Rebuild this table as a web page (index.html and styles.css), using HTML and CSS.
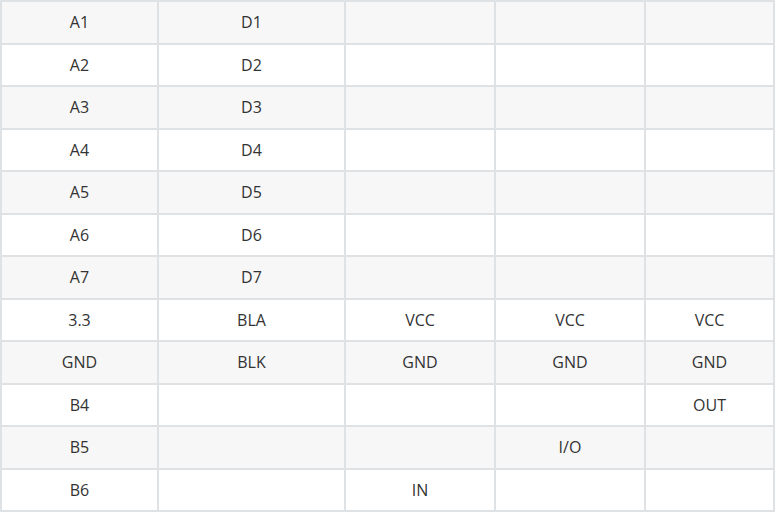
FILE: index.html
```html
<!DOCTYPE html>
<html>
<head>
<meta charset="utf-8">
<link rel="stylesheet" href="styles.css">
</head>
<body>
<table class="pins">
  <colgroup>
    <col class="c1"><col class="c2"><col class="c3"><col class="c4"><col class="c5">
  </colgroup>
  <tbody>
    <tr><td>A1</td><td>D1</td><td></td><td></td><td></td></tr>
    <tr><td>A2</td><td>D2</td><td></td><td></td><td></td></tr>
    <tr><td>A3</td><td>D3</td><td></td><td></td><td></td></tr>
    <tr><td>A4</td><td>D4</td><td></td><td></td><td></td></tr>
    <tr><td>A5</td><td>D5</td><td></td><td></td><td></td></tr>
    <tr><td>A6</td><td>D6</td><td></td><td></td><td></td></tr>
    <tr><td>A7</td><td>D7</td><td></td><td></td><td></td></tr>
    <tr><td>3.3</td><td>BLA</td><td>VCC</td><td>VCC</td><td>VCC</td></tr>
    <tr><td>GND</td><td>BLK</td><td>GND</td><td>GND</td><td>GND</td></tr>
    <tr><td>B4</td><td></td><td></td><td></td><td>OUT</td></tr>
    <tr><td>B5</td><td></td><td></td><td>I/O</td><td></td></tr>
    <tr><td>B6</td><td></td><td>IN</td><td></td><td></td></tr>
  </tbody>
</table>
</body>
</html>
```
FILE: styles.css
```css
html, body {
  margin: 0;
  padding: 0;
  background: #ffffff;
}

.pins {
  border-collapse: separate;
  border-spacing: 2px;
  background: #dfe2e5;
  table-layout: fixed;
  width: 775px;
  font-family: "Open Sans", "Noto Sans", sans-serif;
  font-size: 16px;
  color: #333333;
}

.c1 { width: 155px; }
.c2 { width: 185px; }
.c3 { width: 148px; }
.c4 { width: 148px; }
.c5 { width: 127px; }

.pins td {
  height: 40.5px;
  padding: 0;
  text-align: center;
  vertical-align: middle;
  background: #ffffff;
  line-height: 20px;
}

.pins tr:nth-child(odd) td {
  background: #f7f7f7;
}
```
